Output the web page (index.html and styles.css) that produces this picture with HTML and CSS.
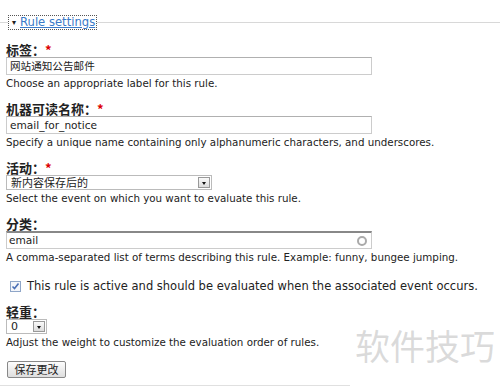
FILE: index.html
```html
<!DOCTYPE html>
<html lang="zh-CN">
<head>
    <meta charset="UTF-8">
    <title>Rule settings</title>
    <link rel="stylesheet" href="styles.css">
</head>
<body>
    <form class="rule-form">
        <fieldset class="settings">
            <legend class="legend"><span class="legend-arrow">&#9662;</span><a href="#" class="legend-link">Rule settings</a></legend>

            <div class="form-item">
                <label class="label">标签：<span class="req">*</span></label>
                <div class="text-input">网站通知公告邮件</div>
                <div class="desc">Choose an appropriate label for this rule.</div>
            </div>

            <div class="form-item">
                <label class="label">机器可读名称：<span class="req">*</span></label>
                <div class="text-input">email_for_notice</div>
                <div class="desc">Specify a unique name containing only alphanumeric characters, and underscores.</div>
            </div>

            <div class="form-item">
                <label class="label">活动：<span class="req">*</span></label>
                <div class="select select-wide">
                    <span class="select-value">新内容保存后的</span>
                    <span class="select-arrow"></span>
                </div>
                <div class="desc">Select the event on which you want to evaluate this rule.</div>
            </div>

            <div class="form-item">
                <label class="label">分类：</label>
                <div class="text-input autocomplete">email<span class="throbber"></span></div>
                <div class="desc">A comma-separated list of terms describing this rule. Example: funny, bungee jumping.</div>
            </div>

            <div class="form-item check-item">
                <span class="checkbox">
                    <svg width="9" height="9" viewBox="0 0 9 9"><path d="M1.5 4.5 L3.5 6.5 L7.5 1.5" fill="none" stroke="#4a6fb5" stroke-width="1.6"/></svg>
                </span>
                <span class="check-label">This rule is active and should be evaluated when the associated event occurs.</span>
            </div>

            <div class="form-item">
                <label class="label">轻重：</label>
                <div class="select select-small">
                    <span class="select-value">0</span>
                    <span class="select-arrow"></span>
                </div>
                <div class="desc">Adjust the weight to customize the evaluation order of rules.</div>
            </div>

            <button type="button" class="btn-save">保存更改</button>
        </fieldset>
        <div class="bottom-line"></div>
    </form>

    <div class="watermark">软件技巧</div>
</body>
</html>
```

FILE: styles.css
```css
* {
    margin: 0;
    padding: 0;
    box-sizing: border-box;
}

body {
    background: #fff;
    color: #222;
    font-family: 'DejaVu Sans', Verdana, 'Noto Sans CJK SC', sans-serif;
    font-size: 10.3px;
    padding-top: 15px;
    position: relative;
    width: 500px;
    height: 390px;
    overflow: hidden;
}

.settings {
    border: none;
    border-top: 1px solid #d8d8d8;
    padding: 12px 6px 0 6px;
}

.legend {
    margin-left: 2px;
    padding: 0 1px 0 3px;
    border: 1px dotted #555;
    line-height: 13px;
    font-size: 11.6px;
}

.legend-arrow {
    font-size: 8px;
    margin-right: 4px;
    vertical-align: 1px;
}

.legend-link {
    color: #3a7ac8;
    text-decoration: underline;
}

.form-item {
    margin-bottom: 11px;
}

.label {
    display: block;
    font-family: 'Noto Sans CJK SC', sans-serif;
    font-weight: bold;
    font-size: 13px;
    line-height: 15px;
}

.req {
    color: #d00;
}

.text-input {
    position: relative;
    width: 366px;
    height: 18px;
    border: 1px solid #ccc;
    border-top-color: #b0b0b0;
    padding: 0 3px;
    font-family: 'DejaVu Sans', 'Noto Sans CJK SC', sans-serif;
    font-size: 10.6px;
    line-height: 16px;
}

.autocomplete {
    border-top: 2px solid #888;
    line-height: 15px;
    padding-left: 2px;
}

.throbber {
    position: absolute;
    right: 4px;
    top: 3px;
    width: 10px;
    height: 10px;
    border: 2px solid #aaa;
    border-radius: 50%;
}

.desc {
    margin-top: 1px;
    line-height: 14px;
}

.select {
    display: flex;
    align-items: center;
    justify-content: space-between;
    height: 15px;
    border: 1px solid #bbb;
    padding: 0 1px 0 4px;
    font-family: 'Noto Sans CJK SC', sans-serif;
    font-size: 11px;
    line-height: 13px;
}

.select-wide {
    width: 206px;
}

.select-small {
    width: 41px;
    font-family: 'DejaVu Sans', sans-serif;
}

.select-arrow {
    position: relative;
    width: 12px;
    height: 11px;
    border: 1px solid #999;
    background: linear-gradient(#fafafa, #dcdcdc);
}

.select-arrow::after {
    content: "";
    position: absolute;
    left: 3px;
    top: 4px;
    border-left: 2.5px solid transparent;
    border-right: 2.5px solid transparent;
    border-top: 3px solid #111;
}

.check-item {
    display: flex;
    align-items: center;
    padding: 4px 0 0 4px;
}

.checkbox {
    display: flex;
    align-items: center;
    justify-content: center;
    width: 11px;
    height: 11px;
    border: 1px solid #8fa6c8;
    background: #f4f6fa;
    margin-right: 6px;
}

.check-label {
    font-size: 11.5px;
    line-height: 14px;
}

.btn-save {
    display: block;
    margin: 12px 0 0 1px;
    width: 59px;
    height: 17px;
    border: 1px solid #888;
    border-radius: 2px;
    background: linear-gradient(#fdfdfd, #dedede);
    font-family: 'Noto Sans CJK SC', sans-serif;
    font-size: 11px;
    line-height: 15px;
    color: #222;
}

.bottom-line {
    width: 350px;
    margin-top: 7px;
    border-top: 1px solid #e0e0e0;
}

.watermark {
    position: absolute;
    left: 355px;
    top: 322px;
    font-family: 'Noto Sans CJK SC', sans-serif;
    font-size: 35px;
    line-height: 46px;
    color: rgba(150, 150, 150, 0.35);
}
```
